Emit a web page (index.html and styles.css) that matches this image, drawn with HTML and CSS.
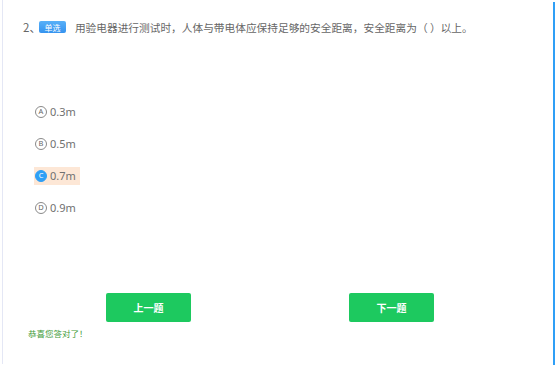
FILE: index.html
```html
<!DOCTYPE html>
<html lang="zh">
<head>
<meta charset="utf-8">
<link rel="stylesheet" href="styles.css">
</head>
<body>
<div class="frame">
  <div class="page">
    <div class="question">
      <span class="num">2、</span>
      <span class="badge">单选</span>
      <span class="qtext">用验电器进行测试时，人体与带电体应保持足够的安全距离，安全距离为（ ）以上。</span>
    </div>
    <div class="options">
      <div class="option"><span class="opt"><span class="letter">A</span><span class="val">0.3m</span></span></div>
      <div class="option"><span class="opt"><span class="letter">B</span><span class="val">0.5m</span></span></div>
      <div class="option"><span class="opt selected"><span class="letter">C</span><span class="val">0.7m</span></span></div>
      <div class="option"><span class="opt"><span class="letter">D</span><span class="val">0.9m</span></span></div>
    </div>
    <div class="buttons">
      <div class="btn">上一题</div>
      <div class="btn">下一题</div>
    </div>
    <div class="msg">恭喜您答对了！</div>
  </div>
  <div class="rule"></div>
</div>
</body>
</html>
```
FILE: styles.css
```css
html, body {
  margin: 0;
  padding: 0;
  background: #ffffff;
}
body {
  font-family: "Noto Sans", "Noto Sans CJK SC", sans-serif;
  color: #666666;
}
.frame {
  display: flex;
  width: 557px;
  height: 367px;
}
.page {
  margin-left: 2px;
  width: 550px;
  height: 364px;
  border-left: 1px solid #e4e7f5;
  box-sizing: border-box;
}
.rule {
  width: 2px;
  height: 363px;
  margin-top: 2px;
  margin-left: 1px;
  background: #2f9ff6;
}
.question {
  display: flex;
  align-items: center;
  height: 14px;
  margin-top: 20px;
  padding-left: 21px;
  font-family: "Noto Sans CJK SC", sans-serif;
  font-size: 11.5px;
  color: #666666;
  white-space: nowrap;
}
.num {
  margin-left: -1px;
}
.qtext {
  font-size: 10.7px;
}
.badge {
  display: inline-flex;
  align-items: center;
  justify-content: center;
  width: 27px;
  height: 12px;
  border-radius: 2px;
  background: linear-gradient(#58b0f8, #3593ef);
  color: #ffffff;
  font-size: 8px;
  margin-left: -2px;
  margin-right: 9px;
}
.options {
  margin-top: 62px;
}
.option {
  height: 32px;
  display: flex;
  align-items: center;
  padding-left: 31px;
}
.opt {
  display: inline-flex;
  align-items: center;
  height: 18px;
  padding: 0 4px 0 1px;
  margin-top: -1px;
}
.opt.selected {
  background: #fde7d6;
}
.letter {
  width: 10px;
  height: 10px;
  border: 1px solid #8a8a8a;
  border-radius: 50%;
  display: inline-flex;
  align-items: center;
  justify-content: center;
  font-size: 7.5px;
  line-height: 1;
  color: #666666;
  margin-right: 3px;
}
.selected .letter {
  background: #2f9ff6;
  border-color: #2f9ff6;
  color: #ffffff;
}
.val {
  font-size: 11px;
  color: #707070;
}
.buttons {
  display: flex;
  gap: 158px;
  margin-top: 69px;
  padding-left: 103px;
}
.btn {
  width: 85px;
  height: 29px;
  border-radius: 2px;
  background: #1dc95f;
  color: #ffffff;
  font-family: "Noto Sans CJK SC", sans-serif;
  font-weight: 700;
  font-size: 10px;
  display: flex;
  align-items: center;
  justify-content: center;
}
.msg {
  margin-top: 6px;
  padding-left: 25px;
  font-family: "Noto Sans CJK SC", sans-serif;
  font-size: 8.5px;
  line-height: 10px;
  color: #449c3c;
}
```
